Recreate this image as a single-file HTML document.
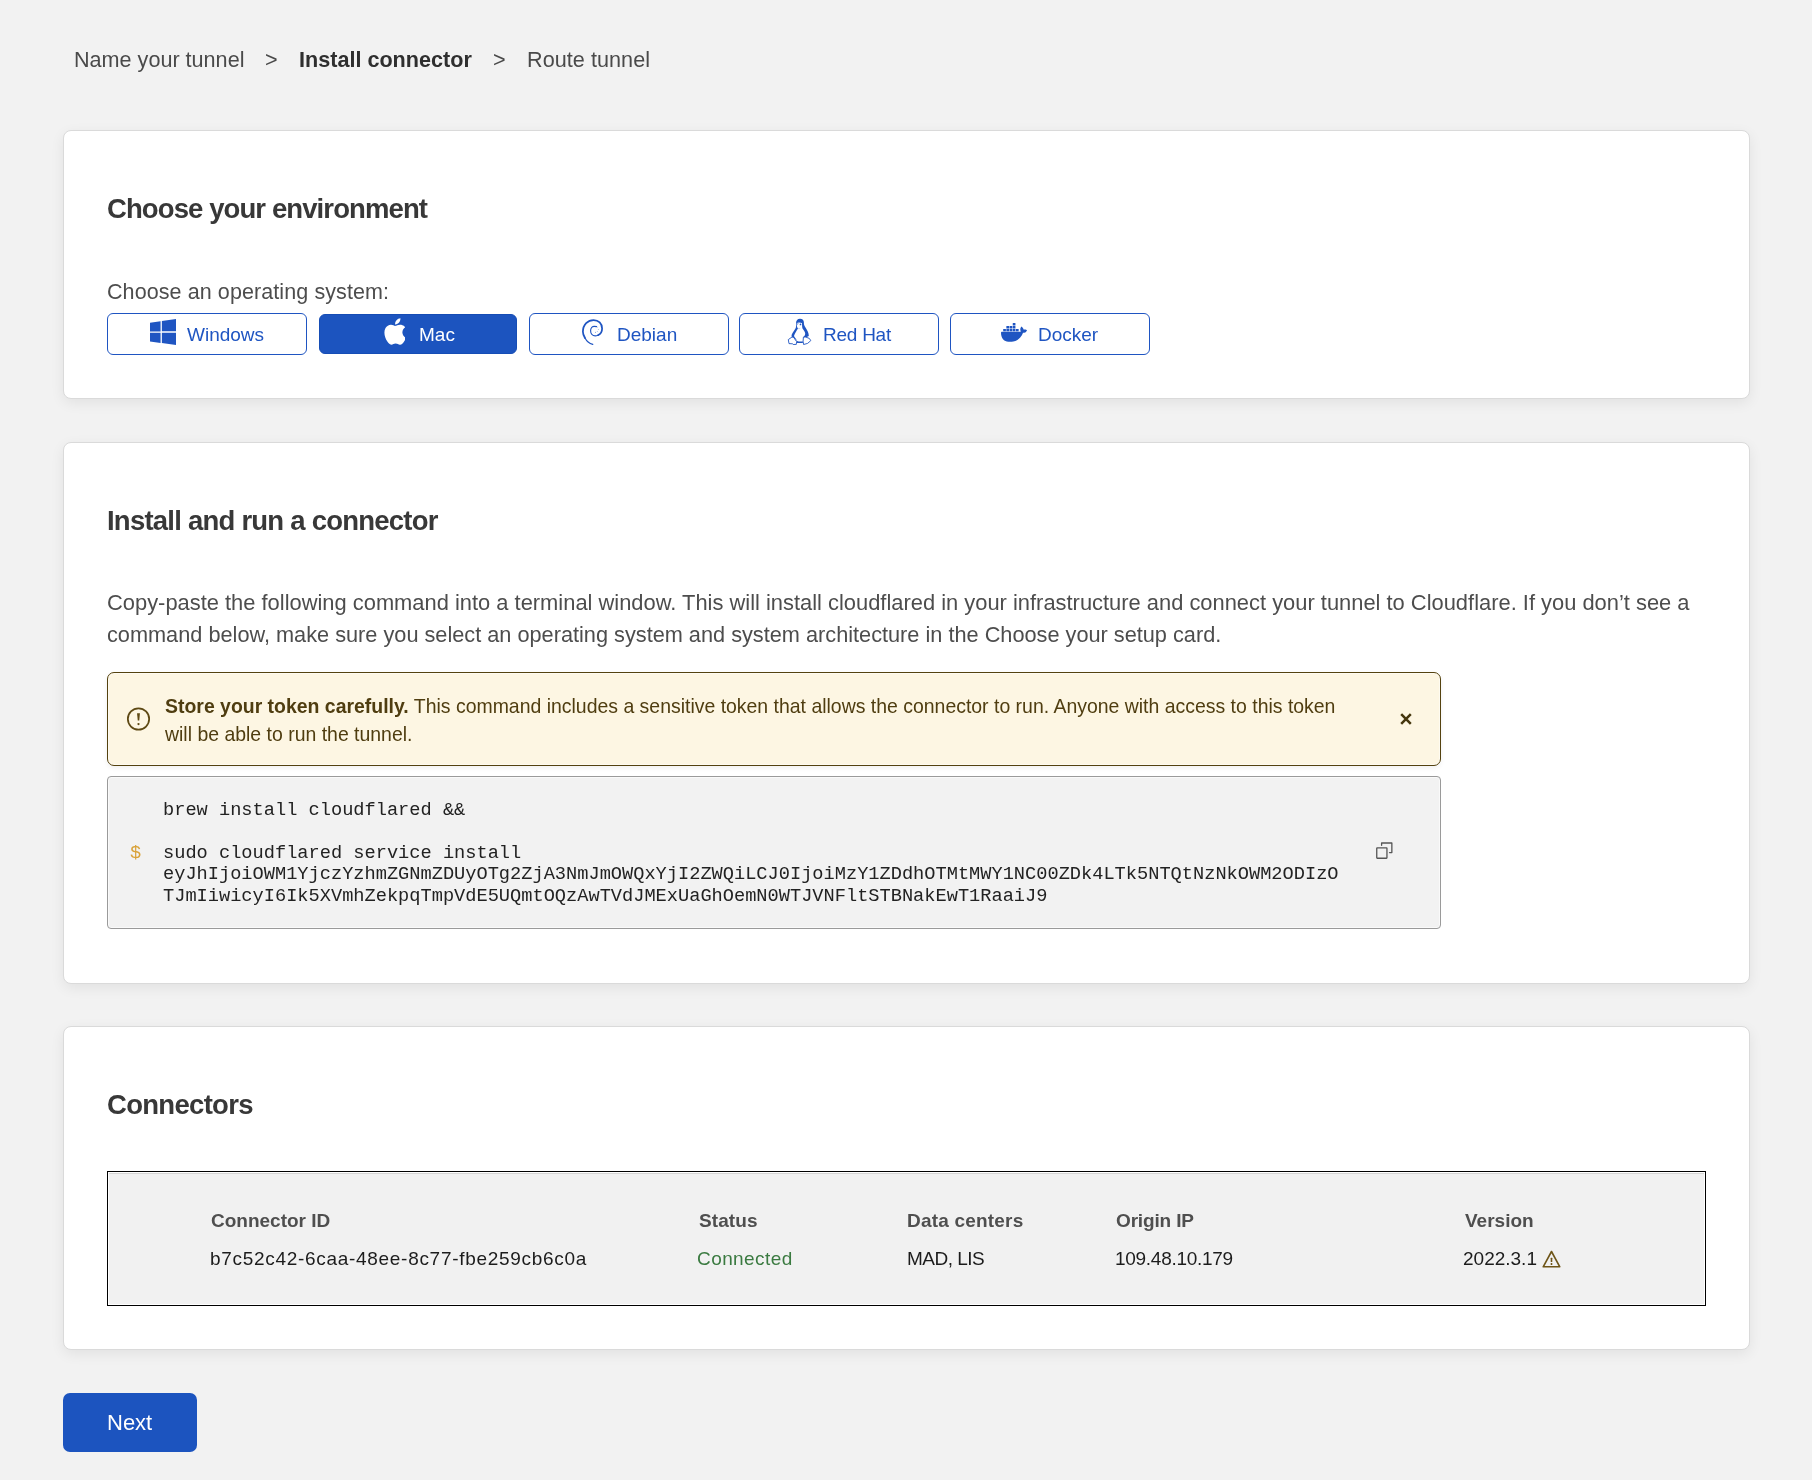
<!DOCTYPE html>
<html>
<head>
<meta charset="utf-8">
<style>
html,body{margin:0;padding:0;}
body{width:1812px;height:1480px;background:#f2f2f2;position:relative;overflow:hidden;font-family:"Liberation Sans",sans-serif;color:#4d4d4d;}
.a{position:absolute;white-space:nowrap;will-change:transform;}
.crumb{font-size:21.6px;line-height:30px;top:44.8px;color:#4a4a4a;}
.crumb.b{font-weight:bold;color:#2f2f2f;}
.card{position:absolute;left:63px;width:1685px;background:#fff;border:1px solid #dadada;border-radius:8px;box-shadow:0 4px 14px rgba(0,0,0,0.07);}
.h{font-size:27.5px;line-height:34px;font-weight:bold;color:#383838;left:107px;letter-spacing:-0.9px;}
.txt{font-size:21.5px;line-height:30px;color:#4d4d4d;}
.btn{position:absolute;top:313px;width:198px;height:40px;border:1px solid #1f55c2;border-radius:6px;background:#fff;color:#1f55c2;font-size:19px;}
.btn.on{background:#1c54bf;color:#fff;border-color:#164db5;}
.btn svg{position:absolute;}
.btn span{will-change:transform;position:absolute;top:8px;line-height:26px;white-space:nowrap;}
.para{letter-spacing:0.006px;font-size:21.88px;line-height:32.2px;color:#4d4d4d;left:107px;top:587.3px;}
.para2{font-size:21.72px;line-height:32.2px;color:#4d4d4d;left:107px;top:619.3px;}
.warn{position:absolute;left:107px;top:672px;width:1332px;height:92px;background:#fdf6e3;border:1px solid #54420f;border-radius:7px;color:#4f3d10;box-shadow:inset 0 0 0 1px rgba(255,255,255,0.5),0 2px 5px rgba(0,0,0,0.06);}
.wt{font-size:19.45px;line-height:28.2px;}
.code{position:absolute;left:107px;top:776px;width:1332px;height:151px;background:#f2f2f2;border:1px solid #9a9a9a;border-radius:4px;box-shadow:inset 0 0 0 1px rgba(255,255,255,0.6);}
.mono{font-family:"Liberation Mono",monospace;font-size:18.66px;line-height:21.4px;color:#222;}
.tbl{position:absolute;left:107px;top:1171px;width:1597px;height:133px;background:#f1f1f1;border:1px solid #000;box-shadow:inset 0 0 0 1px #fff;}
.tbl:before{content:"";position:absolute;left:1px;right:1px;top:1px;height:1px;background:#d6d6d6;}
.th{font-size:19px;line-height:26px;font-weight:bold;color:#4f4f4f;top:1208.4px;}
.td{font-size:19px;line-height:26px;color:#1c1c1c;top:1246.4px;}
.next{position:absolute;left:63px;top:1393px;width:134px;height:59px;background:#1c54bf;border-radius:7px;}
</style>
</head>
<body>
<!-- breadcrumb -->
<div class="a crumb" style="left:74px;">Name your tunnel</div>
<div class="a crumb" style="left:265px;">&gt;</div>
<div class="a crumb b" style="left:299px;">Install connector</div>
<div class="a crumb" style="left:493px;">&gt;</div>
<div class="a crumb" style="left:527px;letter-spacing:0.05px;">Route tunnel</div>

<!-- card 1 -->
<div class="card" style="top:130px;height:267px;"></div>
<div class="a h" style="top:191.6px;">Choose your environment</div>
<div class="a txt" style="left:107px;top:276.5px;letter-spacing:0.09px;">Choose an operating system:</div>

<div class="btn" style="left:107px;">
  <svg style="left:42px;top:5px;" width="26" height="26" viewBox="0 0 24 24"><path fill="#1f55c2" d="M0 3.449L9.75 2.1v9.451H0m10.949-9.602L24 0v11.4H10.949M0 12.6h9.75v9.451L0 20.699M10.949 12.6H24V24l-13.051-1.801"/></svg>
  <span style="left:79px;">Windows</span>
</div>
<div class="btn on" style="left:319px;top:314px;width:196px;height:38px;">
  <svg style="left:63px;top:3px;" width="22" height="27" viewBox="0 0 20 24"><path fill="#fff" d="M11.2 6.9c-.95 0-2.4-1.08-3.96-1.04C5.2 5.89 3.33 7.04 2.28 8.87.16 12.55 1.73 17.98 3.8 20.96c1.01 1.45 2.21 3.09 3.79 3.04 1.52-.07 2.09-.99 3.94-.99 1.83 0 2.35.99 3.96.95 1.64-.03 2.68-1.48 3.68-2.95 1.16-1.69 1.64-3.33 1.66-3.42-.04-.01-3.18-1.22-3.22-4.86-.03-3.04 2.48-4.49 2.6-4.56-1.43-2.09-3.62-2.32-4.39-2.38-2-.16-3.68 1.09-4.61 1.09zM14.58 3.83c.84-1.01 1.4-2.43 1.25-3.83-1.21.05-2.66.8-3.53 1.82-.78.9-1.45 2.34-1.27 3.71 1.34.1 2.72-.69 3.56-1.7"/></svg>
  <span style="left:99px;top:7px;">Mac</span>
</div>
<div class="btn" style="left:529px;">
  <svg style="left:48px;top:1px;" width="30" height="33" viewBox="0 0 30 33"><g fill="none" stroke="#1f55c2" stroke-linecap="round"><path stroke-width="1.2" d="M14.8 29.4C11.5 28.4 8.5 26 7 23"/><path stroke-width="1.75" d="M7 23C5.5 20.5 4.9 18.5 4.9 16.7 4.9 9.5 10 5 15.6 5 20.5 5 24.1 8.5 24.1 13.4 24.1 16.5 22.5 19 20 20.2"/><path stroke-width="1.15" d="M20 20.2C19 20.6 18 20.8 17.2 20.8 14.5 20.8 12.6 18.5 12.6 15.8 12.6 13 14.5 11.3 16.2 11.3 17 11.3 17.8 11.4 18.6 11.6"/></g><g fill="#1f55c2" opacity="0.45"><circle cx="19.5" cy="12.3" r="0.45"/><circle cx="20.4" cy="14.4" r="0.5"/><circle cx="19.3" cy="16.4" r="0.5"/><circle cx="17.5" cy="17.4" r="0.55"/></g></svg>
  <span style="left:87px;">Debian</span>
</div>
<div class="btn" style="left:739px;">
  <svg style="left:44px;top:1px;" width="32" height="33" viewBox="0 0 32 33"><path fill="#1f55c2" fill-rule="evenodd" d="M16 3.8C13.5 3.8 12 5.8 12 8.5L12 11.5C12 13 11 14.5 9.5 16.5 8 18.5 7.4 20 7.6 21.5L12.5 25.2 13.2 27.9 18.8 27.9 19.3 22.2 22 22.6 24.8 21C24.8 18 23.5 15.5 21.5 12.5 20 10.5 19.9 9 19.9 7.5 19.9 5.3 18.5 3.8 16 3.8ZM12.6 8.0C13.5 7.3 16.5 7.3 17.9 8.0 18.2 10 18 12 18.5 13.4 20 15.5 21.2 17 21.2 18.5 21.2 20 20.5 21 19.5 22L19 26.2C17 26.7 15 26.7 13.1 26 12.2 24 10.8 22.5 10 21 10.8 18.5 12.5 16 14 13.6 13 12.5 12.6 10.5 12.6 8Z"/><circle cx="16.5" cy="9.4" r="0.85" fill="#1f55c2"/><circle cx="13.4" cy="8.6" r="0.75" fill="none" stroke="#1f55c2" stroke-width="0.45"/><path d="M14 13.2c.6.5 1.6.5 2.3 0" fill="none" stroke="#1f55c2" stroke-width="0.4" opacity="0.6"/><g fill="#fff" stroke="#1f55c2" stroke-width="0.9" stroke-linejoin="round"><path d="M4.3 24.6L8 22 9.8 22.6 12.6 26.6 12.3 29.4 9.2 29.5 8.7 28.8 5 28.6Z"/><path d="M19.4 22.1L21.8 22.1 25.3 23.4 26.8 25.6 23.6 28.4 19.6 29.5 19.1 26.2Z"/></g></svg>
  <span style="left:83px;letter-spacing:-0.25px;">Red Hat</span>
</div>
<div class="btn" style="left:950px;">
  <svg style="left:50px;top:8.6px;" width="26" height="19.6" viewBox="0 0 24 18"><path fill="#1f55c2" transform="translate(0,-3.4)" d="M13.983 11.078h2.119a.186.186 0 00.186-.185V9.006a.186.186 0 00-.186-.186h-2.119a.185.185 0 00-.185.185v1.888c0 .102.083.185.185.185m-2.954-5.43h2.118a.186.186 0 00.186-.186V3.574a.186.186 0 00-.186-.185h-2.118a.185.185 0 00-.185.185v1.888c0 .102.082.185.185.185m0 2.716h2.118a.187.187 0 00.186-.186V6.29a.186.186 0 00-.186-.185h-2.118a.185.185 0 00-.185.185v1.887c0 .102.082.185.185.186m-2.93 0h2.12a.186.186 0 00.184-.186V6.29a.185.185 0 00-.185-.185H8.1a.185.185 0 00-.185.185v1.887c0 .102.083.185.185.186m-2.964 0h2.119a.186.186 0 00.185-.186V6.29a.185.185 0 00-.185-.185H5.136a.186.186 0 00-.186.185v1.887c0 .102.084.185.186.186m5.893 2.715h2.118a.186.186 0 00.186-.185V9.006a.186.186 0 00-.186-.186h-2.118a.185.185 0 00-.185.185v1.888c0 .102.082.185.185.185m-2.93 0h2.12a.185.185 0 00.184-.185V9.006a.185.185 0 00-.184-.186h-2.12a.185.185 0 00-.184.185v1.888c0 .102.083.185.185.185m-2.964 0h2.119a.185.185 0 00.185-.185V9.006a.185.185 0 00-.184-.186h-2.12a.186.186 0 00-.186.186v1.887c0 .102.084.185.186.185m-2.92 0h2.12a.185.185 0 00.184-.185V9.006a.185.185 0 00-.184-.186h-2.12a.185.185 0 00-.184.185v1.888c0 .102.082.185.185.185M23.763 9.89c-.065-.051-.672-.51-1.954-.51-.338.001-.676.03-1.01.087-.248-1.7-1.653-2.53-1.716-2.566l-.344-.199-.226.327c-.284.438-.49.922-.612 1.43-.23.97-.09 1.882.403 2.661-.595.332-1.55.413-1.744.42H.751a.751.751 0 00-.75.748 11.376 11.376 0 00.692 4.062c.545 1.428 1.355 2.48 2.41 3.124 1.18.723 3.1 1.137 5.275 1.137.983.003 1.963-.086 2.93-.266a12.248 12.248 0 003.823-1.389c.98-.567 1.86-1.288 2.61-2.136 1.252-1.418 1.998-2.997 2.553-4.4h.221c1.372 0 2.215-.549 2.68-1.009.309-.293.55-.65.707-1.046l.098-.288Z"/></svg>
  <span style="left:87px;">Docker</span>
</div>

<!-- card 2 -->
<div class="card" style="top:442px;height:540px;"></div>
<div class="a h" style="top:503.7px;letter-spacing:-0.77px;">Install and run a connector</div>
<div class="a para">Copy-paste the following command into a terminal window. This will install cloudflared in your infrastructure and connect your tunnel to Cloudflare. If you don’t see a</div>
<div class="a para2">command below, make sure you select an operating system and system architecture in the Choose your setup card.</div>

<div class="warn">
  <svg style="position:absolute;left:17.9px;top:33.9px;" width="25" height="25" viewBox="0 0 25 25"><circle cx="12.5" cy="12" r="10.65" fill="none" stroke="#5e4914" stroke-width="1.75"/><path d="M11.05 6.3H13.95L13.25 13.6H11.75Z" fill="#5e4914"/><circle cx="12.5" cy="17.1" r="1.15" fill="#5e4914"/></svg>
  <div class="a wt" style="left:57px;top:18.8px;"><b>Store your token carefully.</b> This command includes a sensitive token that allows the connector to run. Anyone with access to this token<br>will be able to run the tunnel.</div>
  <svg style="position:absolute;left:1292px;top:39.5px;" width="12" height="12" viewBox="0 0 12 12"><path d="M1.2 1.2l9.6 9.6M10.8 1.2l-9.6 9.6" stroke="#45360d" stroke-width="2.5" stroke-linecap="butt"/></svg>
</div>

<div class="code">
  <div class="a mono" style="left:22px;top:66px;color:#d9a238;">$</div>
  <div class="a mono" style="left:55px;top:23px;">brew install cloudflared &amp;&amp;<br><br>sudo cloudflared service install<br>eyJhIjoiOWM1YjczYzhmZGNmZDUyOTg2ZjA3NmJmOWQxYjI2ZWQiLCJ0IjoiMzY1ZDdhOTMtMWY1NC00ZDk4LTk5NTQtNzNkOWM2ODIzO<br>TJmIiwicyI6Ik5XVmhZekpqTmpVdE5UQmtOQzAwTVdJMExUaGhOemN0WTJVNFltSTBNakEwT1RaaiJ9</div>
  <svg style="position:absolute;left:1261.5px;top:57.5px;" width="30" height="30" viewBox="0 0 30 30"><g fill="none" stroke="#555" stroke-width="1.3" stroke-linecap="round" stroke-linejoin="round"><rect x="6.75" y="12.85" width="10.2" height="10.4" rx="0.5"/><path d="M11.6 10.3V8H21.85V17.6H19.5"/></g></svg>
</div>

<!-- card 3 -->
<div class="card" style="top:1026px;height:322px;"></div>
<div class="a h" style="top:1087.5px;letter-spacing:-0.7px;">Connectors</div>
<div class="tbl"></div>
<div class="a th" style="left:211px;">Connector ID</div>
<div class="a th" style="left:699px;letter-spacing:0.1px;">Status</div>
<div class="a th" style="left:907px;letter-spacing:0.2px;">Data centers</div>
<div class="a th" style="left:1116px;letter-spacing:-0.15px;">Origin IP</div>
<div class="a th" style="left:1465px;">Version</div>
<div class="a td" style="left:210px;letter-spacing:0.7px;">b7c52c42-6caa-48ee-8c77-fbe259cb6c0a</div>
<div class="a td" style="left:697px;color:#3a7a40;letter-spacing:0.42px;">Connected</div>
<div class="a td" style="left:907px;letter-spacing:-0.5px;">MAD, LIS</div>
<div class="a td" style="left:1115px;letter-spacing:-0.28px;">109.48.10.179</div>
<div class="a td" style="left:1463px;letter-spacing:0px;">2022.3.1</div>
<svg class="a" style="left:1542px;top:1250px;" width="19" height="18" viewBox="0 0 19 18"><path d="M9.5 1.5L1.2 16.8h16.6z" fill="none" stroke="#6e5518" stroke-width="1.6" stroke-linejoin="round"/><rect x="8.7" y="7.8" width="1.6" height="4.2" rx="0.5" fill="#6e5518"/><rect x="8.7" y="13" width="1.6" height="1.9" rx="0.5" fill="#6e5518"/></svg>

<!-- next -->
<div class="next"></div>
<div class="a" style="left:107px;top:1408.3px;font-size:22px;line-height:30px;color:#fff;">Next</div>
</body>
</html>
